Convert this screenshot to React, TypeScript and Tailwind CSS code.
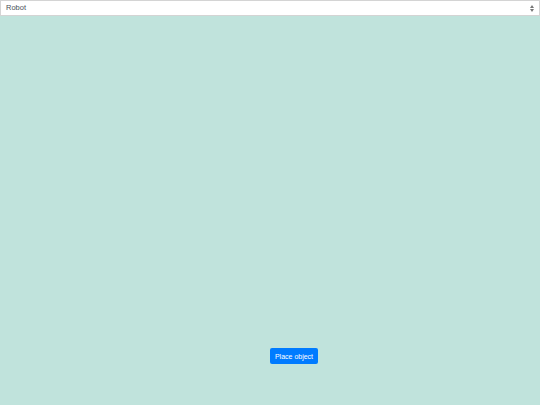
export default function App() {
  return (
    <div className="relative w-[540px] h-[405px] bg-[#c0e3dc] overflow-hidden font-['Liberation_Sans',Arial,sans-serif]">
      <div className="flex items-center justify-between h-[16px] bg-white border border-[#d4d4d4] pl-[5px] pr-[5px] text-[7.5px] text-[#495057]">
        <span>Robot</span>
        <svg width="4" height="7" viewBox="0 0 4 7">
          <path d="M2 0 L4 3 L0 3 Z M0 4 L4 4 L2 7 Z" fill="#777" />
        </svg>
      </div>
      <button className="absolute left-[270px] top-[348px] w-[48px] h-[16px] rounded-[2px] bg-[#007bff] text-white text-[7px] leading-none">
        Place object
      </button>
    </div>
  )
}
